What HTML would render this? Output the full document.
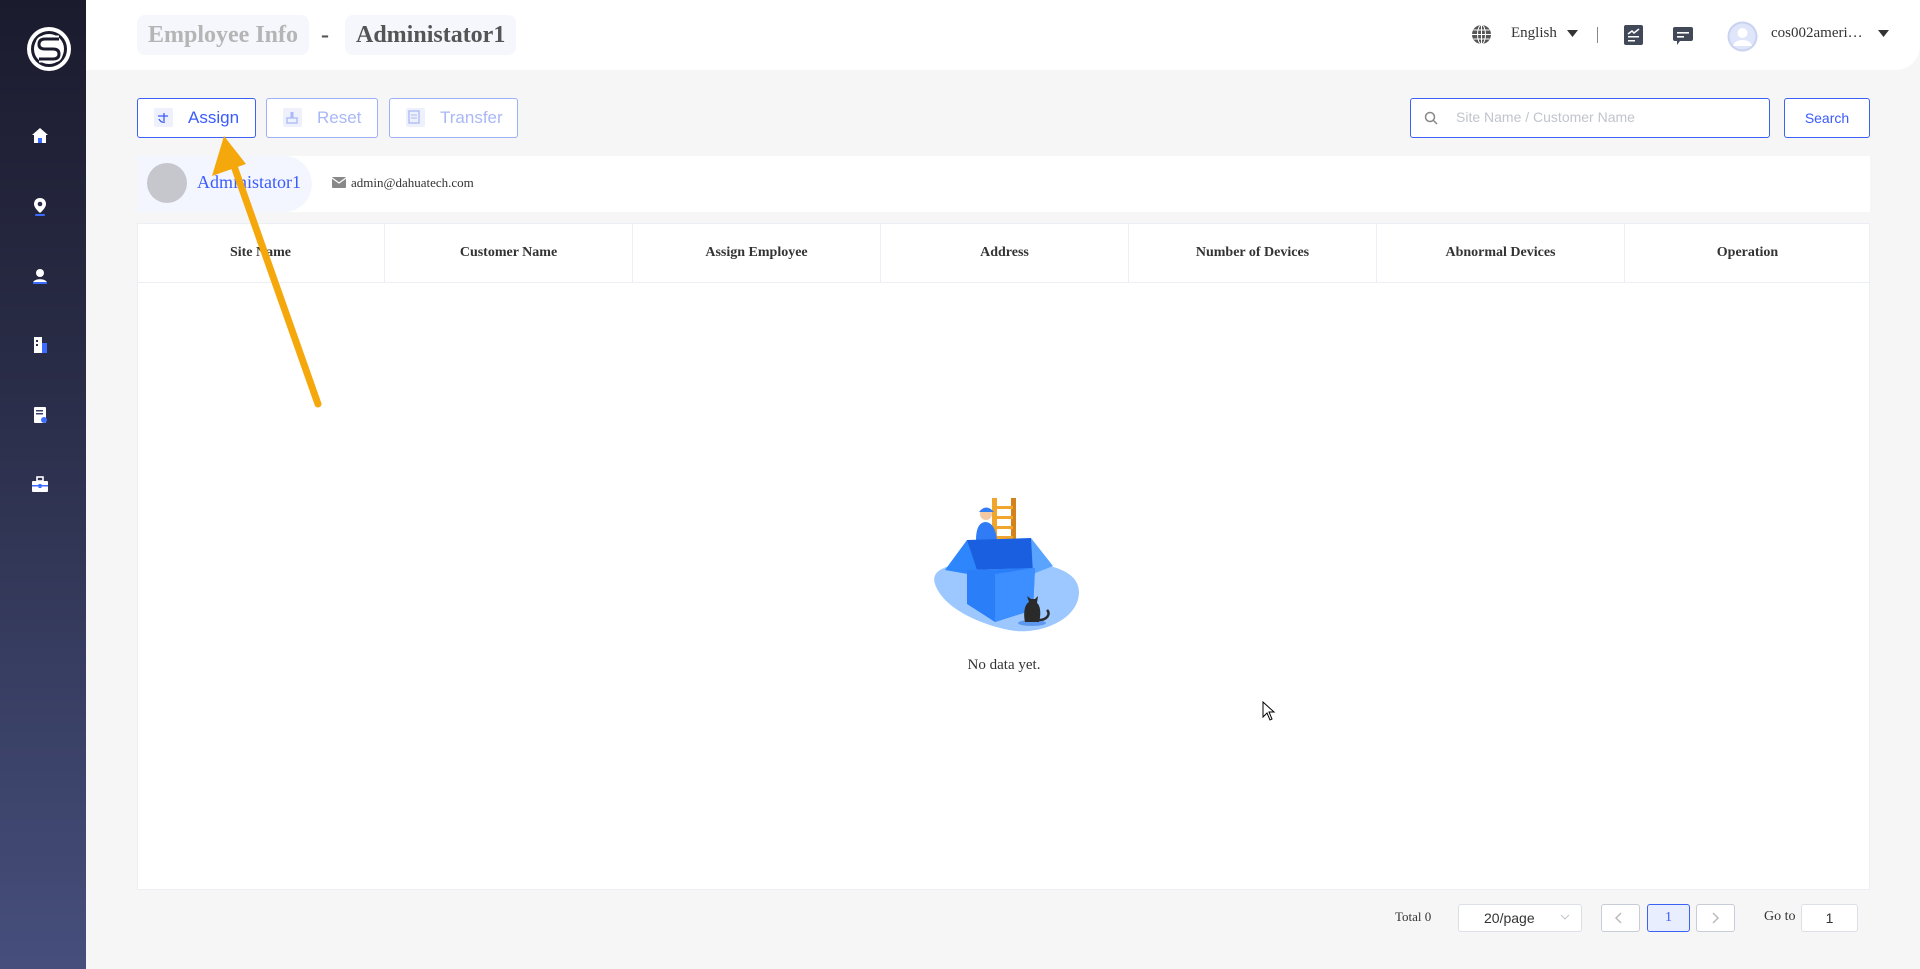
<!DOCTYPE html>
<html><head><meta charset="utf-8"><style>
*{box-sizing:border-box;margin:0;padding:0}
body{width:1920px;height:969px;overflow:hidden;background:#f6f6f6;font-family:"Liberation Serif",serif;position:relative}
.abs{position:absolute}
.side{left:0;top:0;width:86px;height:969px;background:linear-gradient(180deg,#1b1b2e 0%,#2a2d48 40%,#464f7c 100%)}
.header{left:86px;top:0;width:1834px;height:70px;background:#fff;border-bottom-right-radius:24px}
.tbox{top:15px;height:40px;border-radius:8px;background:#f5f7fc;font-weight:bold;font-size:24px;line-height:40px;padding:0 11px}
.btn{top:98px;height:40px;border:1px solid #9db0f8;border-radius:3px;background:#fff;font-family:"Liberation Sans",sans-serif;font-size:17px;color:#a9b8f6;line-height:38px}
.btn .ic{position:absolute;left:16px;top:9px;width:19px;height:19px;background:#eef1fc;border-radius:2px}
.th{top:223px;height:59px;line-height:59px;text-align:center;font-weight:bold;font-size:14px;color:#333;border-right:1px solid #ebeef5}
</style></head><body>
<div class="abs side"></div>
<svg class="abs" style="left:25px;top:25px" width="48" height="48" viewBox="0 0 48 48"><circle cx="24" cy="24" r="22" fill="#fff"/><circle cx="24" cy="24" r="16.5" fill="none" stroke="#1b1b2e" stroke-width="3"/><path d="M34 14 L20 14 Q14 14 14 19.5 Q14 24 20 24 L28 24 Q34 24 34 29 Q34 34 28 34 L14 34" fill="none" stroke="#fff" stroke-width="7"/><path d="M34 14 L20 14 Q14 14 14 19.5 Q14 24 20 24 L28 24 Q34 24 34 29 Q34 34 28 34 L14 34" fill="none" stroke="#1b1b2e" stroke-width="3"/></svg>
<!-- sidebar icons -->
<svg class="abs" style="left:31px;top:127px" width="18" height="18" viewBox="0 0 18 18"><path d="M9 1 L17 8 H15 V16 H3 V8 H1Z" fill="#fff"/><rect x="7" y="11" width="4" height="5" fill="#3b6bff"/></svg>
<svg class="abs" style="left:32px;top:197px" width="16" height="20" viewBox="0 0 16 20"><path d="M8 1 C4 1 2 4 2 7 C2 11 8 16 8 16 C8 16 14 11 14 7 C14 4 12 1 8 1Z" fill="#fff"/><circle cx="8" cy="7" r="2.3" fill="#2a2d48"/><rect x="3" y="17" width="10" height="2" rx="1" fill="#3b6bff"/></svg>
<svg class="abs" style="left:31px;top:267px" width="18" height="18" viewBox="0 0 18 18"><circle cx="9" cy="6" r="4" fill="#fff"/><path d="M2 16 C2 11 16 11 16 16Z" fill="#fff"/><rect x="2" y="15" width="14" height="2" fill="#3b6bff"/></svg>
<svg class="abs" style="left:31px;top:336px" width="18" height="18" viewBox="0 0 18 18"><rect x="3" y="1" width="8" height="16" fill="#fff"/><rect x="11" y="7" width="5" height="10" fill="#3b6bff"/><rect x="5" y="4" width="2" height="2" fill="#2a2d48"/><rect x="5" y="8" width="2" height="2" fill="#2a2d48"/></svg>
<svg class="abs" style="left:31px;top:406px" width="18" height="18" viewBox="0 0 18 18"><rect x="3" y="1" width="12" height="16" rx="1" fill="#fff"/><rect x="5" y="4" width="7" height="1.5" fill="#3a4068"/><rect x="5" y="7" width="7" height="1.5" fill="#3a4068"/><circle cx="13" cy="14" r="3" fill="#3b6bff"/></svg>
<svg class="abs" style="left:31px;top:476px" width="18" height="18" viewBox="0 0 18 18"><rect x="6" y="1" width="6" height="4" fill="none" stroke="#fff" stroke-width="1.6"/><rect x="1" y="5" width="16" height="11" rx="1" fill="#fff"/><rect x="1" y="9" width="16" height="1.5" fill="#3b6bff"/><rect x="7.5" y="8" width="3" height="4" fill="#3b6bff"/></svg>

<div class="abs header"></div>
<div class="abs tbox" style="left:137px;color:#b5b5b5">Employee Info</div>
<div class="abs" style="left:321px;top:15px;font-size:24px;line-height:40px;color:#555;font-weight:bold">-</div>
<div class="abs tbox" style="left:345px;color:#555">Administator1</div>

<svg class="abs" style="left:1471px;top:24px" width="21" height="21" viewBox="0 0 21 21"><circle cx="10.5" cy="10.5" r="9.5" fill="#555"/><g stroke="#fff" stroke-width="1" fill="none"><ellipse cx="10.5" cy="10.5" rx="4" ry="9.5"/><line x1="10.5" y1="1" x2="10.5" y2="20"/><line x1="1" y1="10.5" x2="20" y2="10.5"/><line x1="2.5" y1="6" x2="18.5" y2="6"/><line x1="2.5" y1="15" x2="18.5" y2="15"/></g></svg>
<div class="abs" style="left:1511px;top:25px;font-size:15px;color:#333">English</div>
<svg class="abs" style="left:1567px;top:30px" width="11" height="8"><path d="M0 0H11L5.5 7Z" fill="#333"/></svg>
<div class="abs" style="left:1597px;top:27px;width:1px;height:16px;background:#888"></div>
<svg class="abs" style="left:1624px;top:25px" width="19" height="20" viewBox="0 0 19 20"><rect width="19" height="20" rx="2" fill="#414858"/><path d="M4 9 L8 6 L10 8 L15 4" stroke="#fff" stroke-width="1.5" fill="none"/><rect x="4" y="11" width="11" height="1.5" fill="#fff"/><rect x="4" y="15" width="7" height="1.5" fill="#fff"/></svg>
<svg class="abs" style="left:1673px;top:26px" width="20" height="20" viewBox="0 0 20 20"><path d="M2 1H18Q20 1 20 3V13Q20 15 18 15H7L4 19V15H2Q0 15 0 13V3Q0 1 2 1Z" fill="#414858"/><rect x="4" y="6" width="12" height="1.6" fill="#fff"/><rect x="4" y="10" width="7" height="1.6" fill="#fff"/></svg>
<svg class="abs" style="left:1727px;top:21px" width="31" height="31" viewBox="0 0 31 31"><circle cx="15.5" cy="15.5" r="15" fill="#c9d3f0"/><circle cx="15.5" cy="15.5" r="13" fill="#dfe6fa"/><circle cx="15.5" cy="12" r="5" fill="#fff"/><path d="M6 25 C8 17 23 17 25 25Z" fill="#fff"/></svg>
<div class="abs" style="left:1771px;top:25px;font-size:15px;color:#333">cos002ameri…</div>
<svg class="abs" style="left:1878px;top:30px" width="11" height="8"><path d="M0 0H11L5.5 7Z" fill="#333"/></svg>

<div class="abs btn" style="left:137px;width:119px;border-color:#3b62f6;color:#3b5bfd"><span class="ic"></span><span style="position:absolute;left:50px">Assign</span></div>
<div class="abs btn" style="left:266px;width:112px"><span class="ic"></span><span style="position:absolute;left:50px">Reset</span></div>
<div class="abs btn" style="left:389px;width:129px"><span class="ic"></span><span style="position:absolute;left:50px">Transfer</span></div>
<svg class="abs" style="left:156px;top:111px" width="14" height="13"><path d="M2 5H12M8 2V10M3 8 Q5 12 9 11" stroke="#3b5bfd" stroke-width="1.3" fill="none"/></svg>
<svg class="abs" style="left:286px;top:111px" width="12" height="13"><rect x="4.5" y="1" width="3" height="6" fill="#a9b8f6"/><rect x="1" y="7" width="10" height="5" fill="none" stroke="#a9b8f6" stroke-width="1.3"/></svg>
<svg class="abs" style="left:408px;top:110px" width="12" height="14"><rect x="1" y="1" width="10" height="12" fill="none" stroke="#a9b8f6" stroke-width="1.3"/><path d="M3 5H9M3 8H9" stroke="#a9b8f6"/></svg>

<div class="abs" style="left:1410px;top:98px;width:360px;height:40px;border:1px solid #3b62f6;border-radius:3px;background:#fff"></div>
<svg class="abs" style="left:1424px;top:111px" width="14" height="14"><circle cx="6" cy="6" r="4.5" stroke="#888" stroke-width="1.5" fill="none"/><line x1="9.5" y1="9.5" x2="13" y2="13" stroke="#888" stroke-width="1.5"/></svg>
<div class="abs" style="left:1456px;top:109px;font-family:'Liberation Sans',sans-serif;font-size:14px;color:#c0c4cc">Site Name / Customer Name</div>
<div class="abs" style="left:1784px;top:98px;width:86px;height:40px;border:1px solid #3b62f6;border-radius:3px;background:#fff;font-family:'Liberation Sans',sans-serif;font-size:14px;color:#3b5bfd;text-align:center;line-height:38px">Search</div>

<div class="abs" style="left:137px;top:156px;width:1733px;height:56px;background:#fff"></div>
<div class="abs" style="left:137px;top:156px;width:175px;height:56px;background:#f3f6fe;border-radius:0 28px 28px 0"></div>
<div class="abs" style="left:147px;top:163px;width:40px;height:40px;border-radius:50%;background:#c5c7cd"></div>
<div class="abs" style="left:197px;top:172px;font-size:18px;color:#3b5bfd">Administator1</div>
<svg class="abs" style="left:332px;top:177px" width="14" height="11"><rect width="14" height="11" rx="1" fill="#888"/><path d="M0 1 L7 6 L14 1" stroke="#fff" stroke-width="1.2" fill="none"/></svg>
<div class="abs" style="left:351px;top:175px;font-size:13px;color:#333">admin@dahuatech.com</div>

<div class="abs" style="left:137px;top:223px;width:1733px;height:667px;background:#fff;border:1px solid #ebeef5"></div>
<div class="abs" style="left:137px;top:282px;width:1733px;height:1px;background:#ebeef5"></div>
<div class="abs th" style="left:137px;width:248px">Site Name</div>
<div class="abs th" style="left:385px;width:248px">Customer Name</div>
<div class="abs th" style="left:633px;width:248px">Assign Employee</div>
<div class="abs th" style="left:881px;width:248px">Address</div>
<div class="abs th" style="left:1129px;width:248px">Number of Devices</div>
<div class="abs th" style="left:1377px;width:248px">Abnormal Devices</div>
<div class="abs th" style="left:1625px;width:245px;border-right:none">Operation</div>

<svg class="abs" style="left:929px;top:496px" width="152" height="142" viewBox="0 0 152 142">
<path d="M6 88 C0 70 30 66 60 66 C100 64 150 68 150 96 C150 124 110 140 80 134 C50 128 14 112 6 88Z" fill="#9cc8ff"/>
<rect x="63" y="2" width="5" height="55" fill="#f0a52c"/><rect x="82" y="2" width="5" height="55" fill="#d6821a"/>
<g fill="#f0a52c"><rect x="66" y="10" width="18" height="3"/><rect x="66" y="20" width="18" height="3"/><rect x="66" y="30" width="18" height="3"/><rect x="66" y="40" width="18" height="3"/></g>
<circle cx="57" cy="18" r="6" fill="#f3c9a4"/><path d="M50 16 Q57 7 65 16Z" fill="#2f7cf6"/><path d="M47 44 Q47 26 57 26 Q66 27 68 44Z" fill="#2f7cf6"/>
<path d="M38 44 L102 42 L108 72 L38 74Z" fill="#1a5fe0"/>
<path d="M16 74 L38 44 L50 80Z" fill="#2d86fb"/><path d="M102 42 L124 70 L104 78Z" fill="#5aa4ff"/>
<path d="M38 74 L106 72 L104 114 L66 126 L38 108Z" fill="#2a7ef8"/><path d="M66 78 L106 72 L104 114 L66 126Z" fill="#3d8fff"/>
<ellipse cx="103" cy="127" rx="14" ry="3" fill="#5d97ee"/>
<path d="M96 126 C94 116 96 108 100 106 L98 100 L102 103 L106 103 L109 100 L108 107 C112 110 112 120 110 126Z" fill="#2a2a2a"/>
<path d="M110 124 C118 124 122 118 118 114" stroke="#2a2a2a" stroke-width="2.5" fill="none"/>
</svg>
<div class="abs" style="left:904px;top:657px;width:200px;text-align:center;font-size:15px;color:#333">No data yet.</div>

<svg class="abs" style="left:1262px;top:701px" width="14" height="20" viewBox="0 0 14 20"><path d="M1 1 L1 16 L5 12 L8 19 L10 18 L7 11 L12 11Z" fill="#fff" stroke="#000" stroke-width="1"/></svg>

<div class="abs" style="left:1395px;top:909px;font-size:13px;color:#333">Total 0</div>
<div class="abs" style="left:1458px;top:904px;width:124px;height:28px;border:1px solid #dcdfe6;border-radius:3px;background:#fff;font-family:'Liberation Sans',sans-serif;font-size:14px;color:#333;line-height:26px;padding-left:25px">20/page</div>
<svg class="abs" style="left:1560px;top:914px" width="10" height="7"><path d="M1 1L5 5L9 1" stroke="#c0c4cc" fill="none"/></svg>
<div class="abs" style="left:1601px;top:904px;width:39px;height:28px;border:1px solid #c8ccd6;border-radius:3px;background:#fff"></div>
<svg class="abs" style="left:1615px;top:912px" width="8" height="12"><path d="M6 1L1 6L6 11" stroke="#bbb" stroke-width="1.5" fill="none"/></svg>
<div class="abs" style="left:1647px;top:904px;width:43px;height:28px;border:1px solid #3b62f6;border-radius:3px;background:#e8eefd;color:#3b5bfd;font-size:14px;text-align:center;line-height:26px">1</div>
<div class="abs" style="left:1696px;top:904px;width:39px;height:28px;border:1px solid #c8ccd6;border-radius:3px;background:#fff"></div>
<svg class="abs" style="left:1712px;top:912px" width="8" height="12"><path d="M1 1L6 6L1 11" stroke="#bbb" stroke-width="1.5" fill="none"/></svg>
<div class="abs" style="left:1764px;top:909px;font-size:14px;color:#333">Go to</div>
<div class="abs" style="left:1801px;top:904px;width:57px;height:28px;border:1px solid #dcdfe6;border-radius:3px;background:#fff;font-family:'Liberation Sans',sans-serif;font-size:14px;color:#333;text-align:center;line-height:26px">1</div>

<svg class="abs" style="left:0;top:0" width="400" height="420">
<line x1="318" y1="404" x2="234" y2="166" stroke="#f5a80c" stroke-width="7" stroke-linecap="round"/>
<path d="M224 136 L212 176 L246 164Z" fill="#f5a80c"/>
</svg>
</body></html>
